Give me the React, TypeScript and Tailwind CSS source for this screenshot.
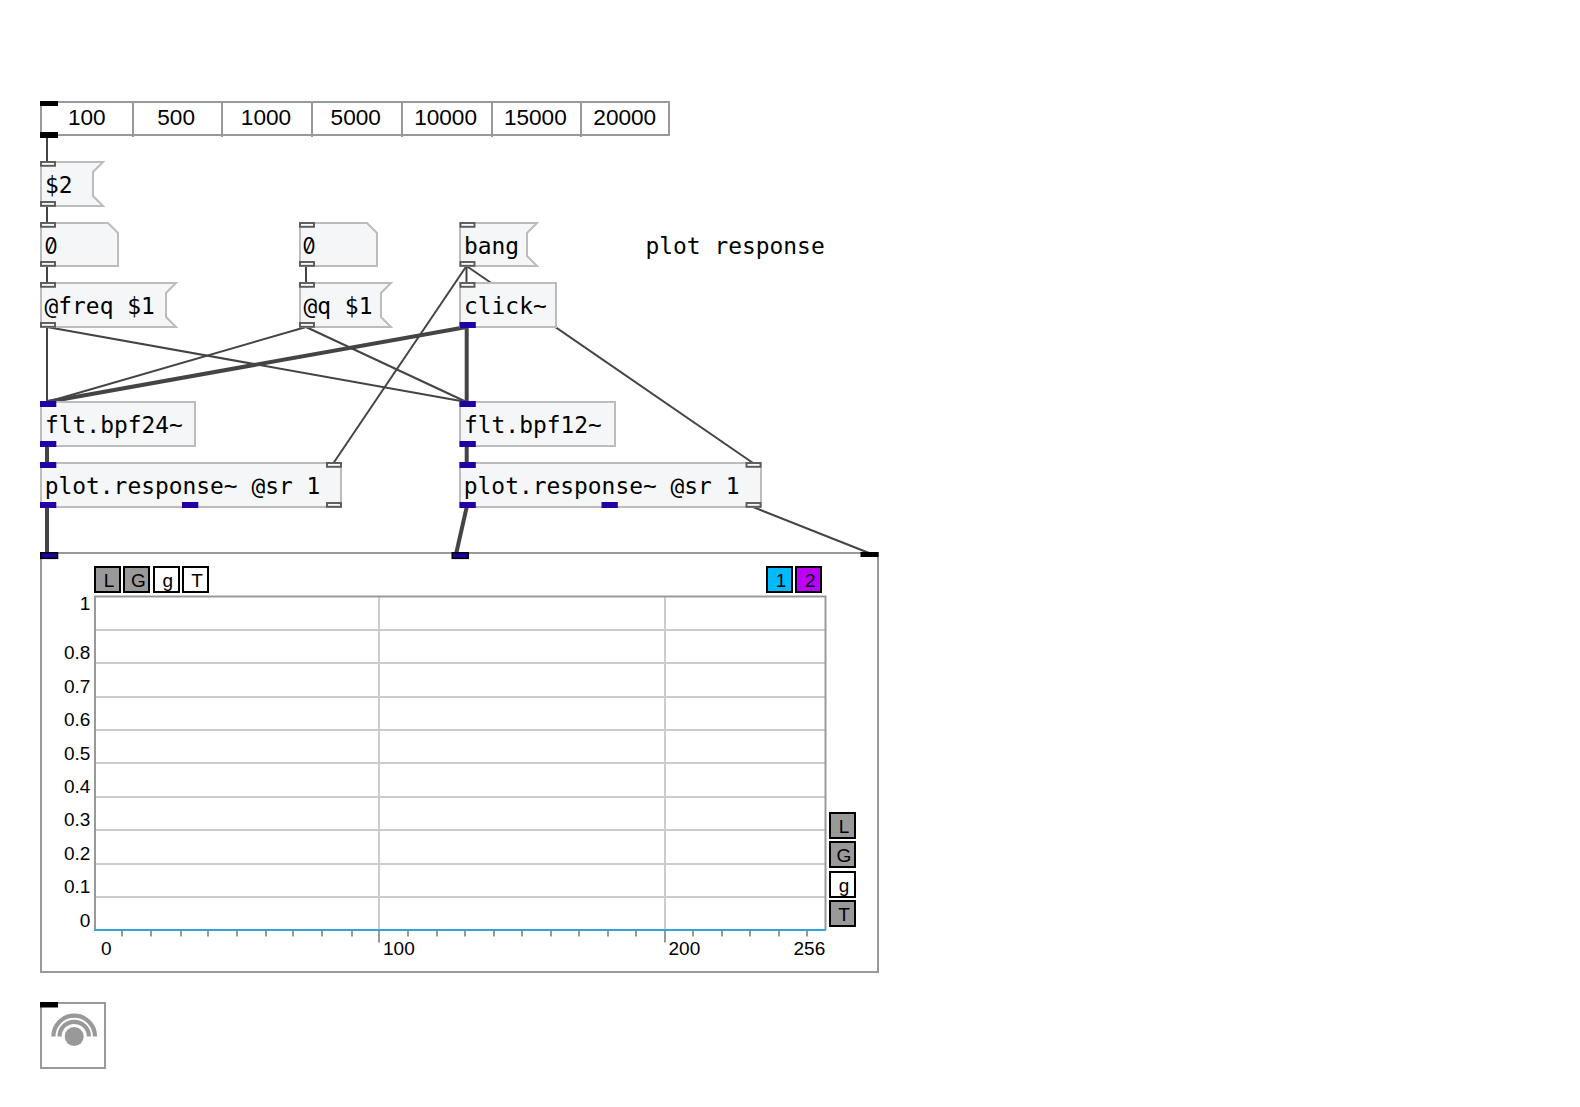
import React from "react";

type Kind = "message" | "number" | "object";
type PortKind = "control" | "signal";
interface Port {
  x: number;
  kind: PortKind;
}
interface PatchNode {
  x: number;
  y: number;
  w: number;
  h: number;
  kind: Kind;
  text: string;
  textX: number;
  inlets: Port[];
  outlets: Port[];
}

const c = (x: number): Port => ({ x, kind: "control" });
const s = (x: number): Port => ({ x, kind: "signal" });

const nodes: PatchNode[] = [
  { x: 40, y: 161, w: 64, h: 46, kind: "message", text: "$2", textX: 5, inlets: [c(0)], outlets: [c(0)] },
  { x: 40, y: 222, w: 79, h: 45, kind: "number", text: "0", textX: 5, inlets: [c(0)], outlets: [c(0)] },
  { x: 299, y: 222, w: 79, h: 45, kind: "number", text: "0", textX: 4, inlets: [c(0)], outlets: [c(0)] },
  { x: 459, y: 222, w: 79, h: 45, kind: "message", text: "bang", textX: 5, inlets: [c(0.5)], outlets: [c(0.5)] },
  { x: 40, y: 282, w: 137, h: 46, kind: "message", text: "@freq $1", textX: 4.5, inlets: [c(0)], outlets: [c(0)] },
  { x: 299, y: 282, w: 93, h: 46, kind: "message", text: "@q $1", textX: 4.5, inlets: [c(0)], outlets: [c(0)] },
  { x: 459, y: 282, w: 98, h: 46, kind: "object", text: "click~", textX: 5, inlets: [c(0.5)], outlets: [s(0.5)] },
  { x: 40, y: 401, w: 156, h: 46, kind: "object", text: "flt.bpf24~", textX: 5, inlets: [s(0)], outlets: [s(0)] },
  { x: 459, y: 401, w: 157, h: 46, kind: "object", text: "flt.bpf12~", textX: 5, inlets: [s(0.5)], outlets: [s(0.5)] },
  { x: 40, y: 462, w: 302, h: 46, kind: "object", text: "plot.response~ @sr 1", textX: 4.7, inlets: [s(0), c(286)], outlets: [s(0), s(142), c(286)] },
  { x: 459, y: 462, w: 303, h: 46, kind: "object", text: "plot.response~ @sr 1", textX: 4.8, inlets: [s(0.5), c(286.5)], outlets: [s(0.5), s(142.5), c(286.5)] },
];

const thinWires = [
  [47, 136, 47, 162],
  [47, 206, 47, 223],
  [47, 266, 47, 283],
  [306, 266, 306, 283],
  [47, 327, 47, 402],
  [47, 327, 466.5, 402],
  [306, 327, 47, 402],
  [306, 327, 466.5, 402],
  [466.5, 266, 333.5, 463],
  [466.5, 266, 466.5, 283],
  [466.5, 266, 753, 463],
  [753, 507, 869, 553],
];
const thickWires = [
  [466.7, 327, 47, 402],
  [466.7, 327, 466.7, 402],
  [47, 446, 47, 463],
  [466.7, 446, 466.7, 463],
  [47, 507, 47, 553],
  [466.7, 507, 456.3, 553],
];

function outline(kind: Kind, w: number, h: number) {
  const r = w - 1;
  const b = h - 1;
  if (kind === "message") return `M1 1H${r}L${r - 10} 11V${b - 10}L${r} ${b}H1Z`;
  if (kind === "number") return `M1 1H${r - 10}L${r} 11V${b}H1Z`;
  return `M1 1H${r}V${b}H1Z`;
}

function PortMark({ port, y }: { port: Port; y: number }) {
  if (port.kind === "signal") return <rect x={port.x} y={y} width="16.3" height="6" fill="#2000a4" />;
  return <rect x={port.x + 1} y={y + 1} width="14" height="3.8" fill="#fafafa" stroke="#5a5a5a" strokeWidth="1.9" />;
}

function NodeBox({ node }: { node: PatchNode }) {
  return (
    <div className="absolute" style={{ left: node.x, top: node.y, width: node.w, height: node.h }}>
      <svg className="absolute inset-0 overflow-visible" width={node.w} height={node.h}>
        <path d={outline(node.kind, node.w, node.h)} fill="#f5f6f8" stroke="#bcbcbc" strokeWidth="2" />
        {node.inlets.map((p) => (
          <PortMark key={p.x} port={p} y={0} />
        ))}
        {node.outlets.map((p) => (
          <PortMark key={p.x} port={p} y={node.h - 6} />
        ))}
      </svg>
      <div
        className={
          node.kind === "number"
            ? "relative origin-left scale-x-90 pt-[12px] font-[Inter,sans-serif] text-[23px] leading-6 [font-feature-settings:'zero']"
            : "relative pt-[12px] font-['DejaVu_Sans_Mono',monospace] text-[22.9px] leading-6 whitespace-pre"
        }
        style={{ paddingLeft: node.textX }}
      >
        {node.text}
      </div>
    </div>
  );
}

function Radio() {
  return (
    <div className="absolute top-[101px] left-[40px] flex h-[35px] w-[630px] border-2 border-[#999] text-[22.6px]">
      {["100", "500", "1000", "5000", "10000", "15000", "20000"].map((v, i) => (
        <div
          key={v}
          className={
            i === 0
              ? "h-[34px] w-[91.5px] shrink-0 border-r-2 border-[#999] pt-[3px] text-center leading-6"
              : i === 6
                ? "h-[31px] grow pt-[3px] pr-px text-center leading-6"
                : "h-[34px] w-[89.8px] shrink-0 border-r-2 border-[#999] pt-[3px] pr-[2.5px] text-center leading-6"
          }
        >
          {v}
        </div>
      ))}
      <div className="absolute -top-[2px] -left-[2px] h-[5px] w-[18px] bg-black" />
      <div className="absolute -bottom-[4px] -left-[2px] h-[6px] w-[18px] bg-black" />
    </div>
  );
}

const tones = {
  gray: "h-[27px] w-[27px] border-2 border-black bg-[#999] pl-[3px] pt-px text-center leading-6",
  white: "h-[27px] w-[27px] border-2 border-black bg-white pl-[3px] pt-px text-center leading-6",
  cyan: "h-[27px] w-[27px] border-2 border-black bg-[#00bbff] pl-[3px] pt-px text-center leading-6",
  purple: "h-[27px] w-[27px] border-2 border-black bg-[#bb00ff] pl-[3px] pt-px text-center leading-6",
};
function Toggle({ label, tone }: { label: string; tone: keyof typeof tones }) {
  return <div className={tones[tone]}>{label}</div>;
}

const ticks = [
  122, 151, 181, 208, 237, 266, 293, 322, 352, 408, 437, 465, 494, 522, 551, 579, 608, 636, 693, 722, 750, 779, 807,
];

function Grid() {
  return (
    <svg className="h-[342px] w-[733px] shrink-0 overflow-visible" viewBox="94 595 733 342">
      {[1, 2, 3, 4, 5, 6, 7, 8, 9].map((k) => (
        <path key={k} d={`M96 ${Math.round(596.3 + k * 33.4)}H825`} stroke="#ccc" strokeWidth="2" />
      ))}
      <path d="M379 597V930M665 597V930" stroke="#ccc" strokeWidth="2" />
      <path d="M379 930V942.5M665 930V942.5" stroke="#999" strokeWidth="2" />
      {ticks.map((x) => (
        <path key={x} d={`M${x} 930V936.5`} stroke="#999" strokeWidth="2" />
      ))}
      <path d="M95 930V596.5H825.5V930" fill="none" stroke="#999" strokeWidth="2" />
      <path d="M94 930H826" stroke="#33a5d0" strokeWidth="2" />
    </svg>
  );
}

function Plot() {
  return (
    <div className="absolute top-[552px] left-[40px] flex h-[421px] w-[838.5px] flex-col border-2 border-[#999] pt-[12px] text-[19px]">
      <svg className="absolute -top-[2px] -left-[2px]" width="839" height="8" viewBox="40 552 839 8">
        <rect x="40.75" y="552.75" width="16.8" height="5.6" fill="#2000a4" stroke="#000" strokeWidth="1.5" />
        <rect x="452.25" y="552.75" width="16" height="5.6" fill="#2000a4" stroke="#000" strokeWidth="1.5" />
        <rect x="860.5" y="552" width="18" height="5" fill="#000" />
      </svg>
      <div className="ml-[52px] flex w-[728.4px] justify-between">
        <div className="flex gap-[2.4px]">
          <Toggle label="L" tone="gray" />
          <Toggle label="G" tone="gray" />
          <Toggle label="g" tone="white" />
          <Toggle label="T" tone="white" />
        </div>
        <div className="flex gap-[2.4px]">
          <Toggle label="1" tone="cyan" />
          <Toggle label="2" tone="purple" />
        </div>
      </div>
      <div className="mt-[2px] flex h-[342px]">
        <div className="flex w-[52px] flex-col pt-px pr-[3.6px] text-right leading-[33.4px]">
          <div className="h-[40.7px] leading-[15px]">1</div>
          {["0.8", "0.7", "0.6", "0.5", "0.4", "0.3", "0.2", "0.1", "0"].map((t) => (
            <div key={t} className="h-[33.4px] shrink-0">
              {t}
            </div>
          ))}
        </div>
        <Grid />
        <div className="flex flex-col gap-[2.3px] pt-[217px] pl-[2px]">
          <Toggle label="L" tone="gray" />
          <Toggle label="G" tone="gray" />
          <Toggle label="g" tone="white" />
          <Toggle label="T" tone="gray" />
        </div>
      </div>
      <div className="flex pl-[59px] leading-6">
        <div className="w-[282px]">0</div>
        <div className="w-[285.5px]">100</div>
        <div className="w-[125px]">200</div>
        <div>256</div>
      </div>
    </div>
  );
}

function Wires() {
  return (
    <svg className="absolute inset-0" width="1580" height="1107" fill="none" stroke="#444">
      {thinWires.map((w) => (
        <path key={w.join()} d={`M${w[0]} ${w[1]}L${w[2]} ${w[3]}`} strokeWidth="2" />
      ))}
      {thickWires.map((w) => (
        <path key={w.join()} d={`M${w[0]} ${w[1]}L${w[2]} ${w[3]}`} strokeWidth="4" />
      ))}
    </svg>
  );
}

function DspSwitch() {
  return (
    <div className="absolute top-[1002px] left-[40px] h-[67px] w-[66px] border-2 border-[#999]">
      <svg className="absolute -top-[2px] -left-[2px]" width="66" height="67" fill="none" stroke="#999">
        <circle cx="34.2" cy="34.5" r="9.5" fill="#999" stroke="none" />
        <path d="M19.5 34.5a14.7 14.7 0 0 1 29.4 0M13.4 34.5a20.8 20.8 0 0 1 41.6 0" strokeWidth="4.2" />
        <rect width="18" height="5.5" fill="#000" stroke="none" />
      </svg>
    </div>
  );
}

export default function App() {
  return (
    <main className="relative h-[1107px] w-[1580px] overflow-hidden bg-white font-['Liberation_Sans',Arial,sans-serif] text-black">
      <Wires />
      <Radio />
      {nodes.map((n) => (
        <NodeBox key={`${n.x}-${n.y}`} node={n} />
      ))}
      <div className="absolute top-[234px] left-[645.5px] font-['DejaVu_Sans_Mono',monospace] text-[22.9px] leading-6 whitespace-pre">
        plot response
      </div>
      <Plot />
      <DspSwitch />
    </main>
  );
}
